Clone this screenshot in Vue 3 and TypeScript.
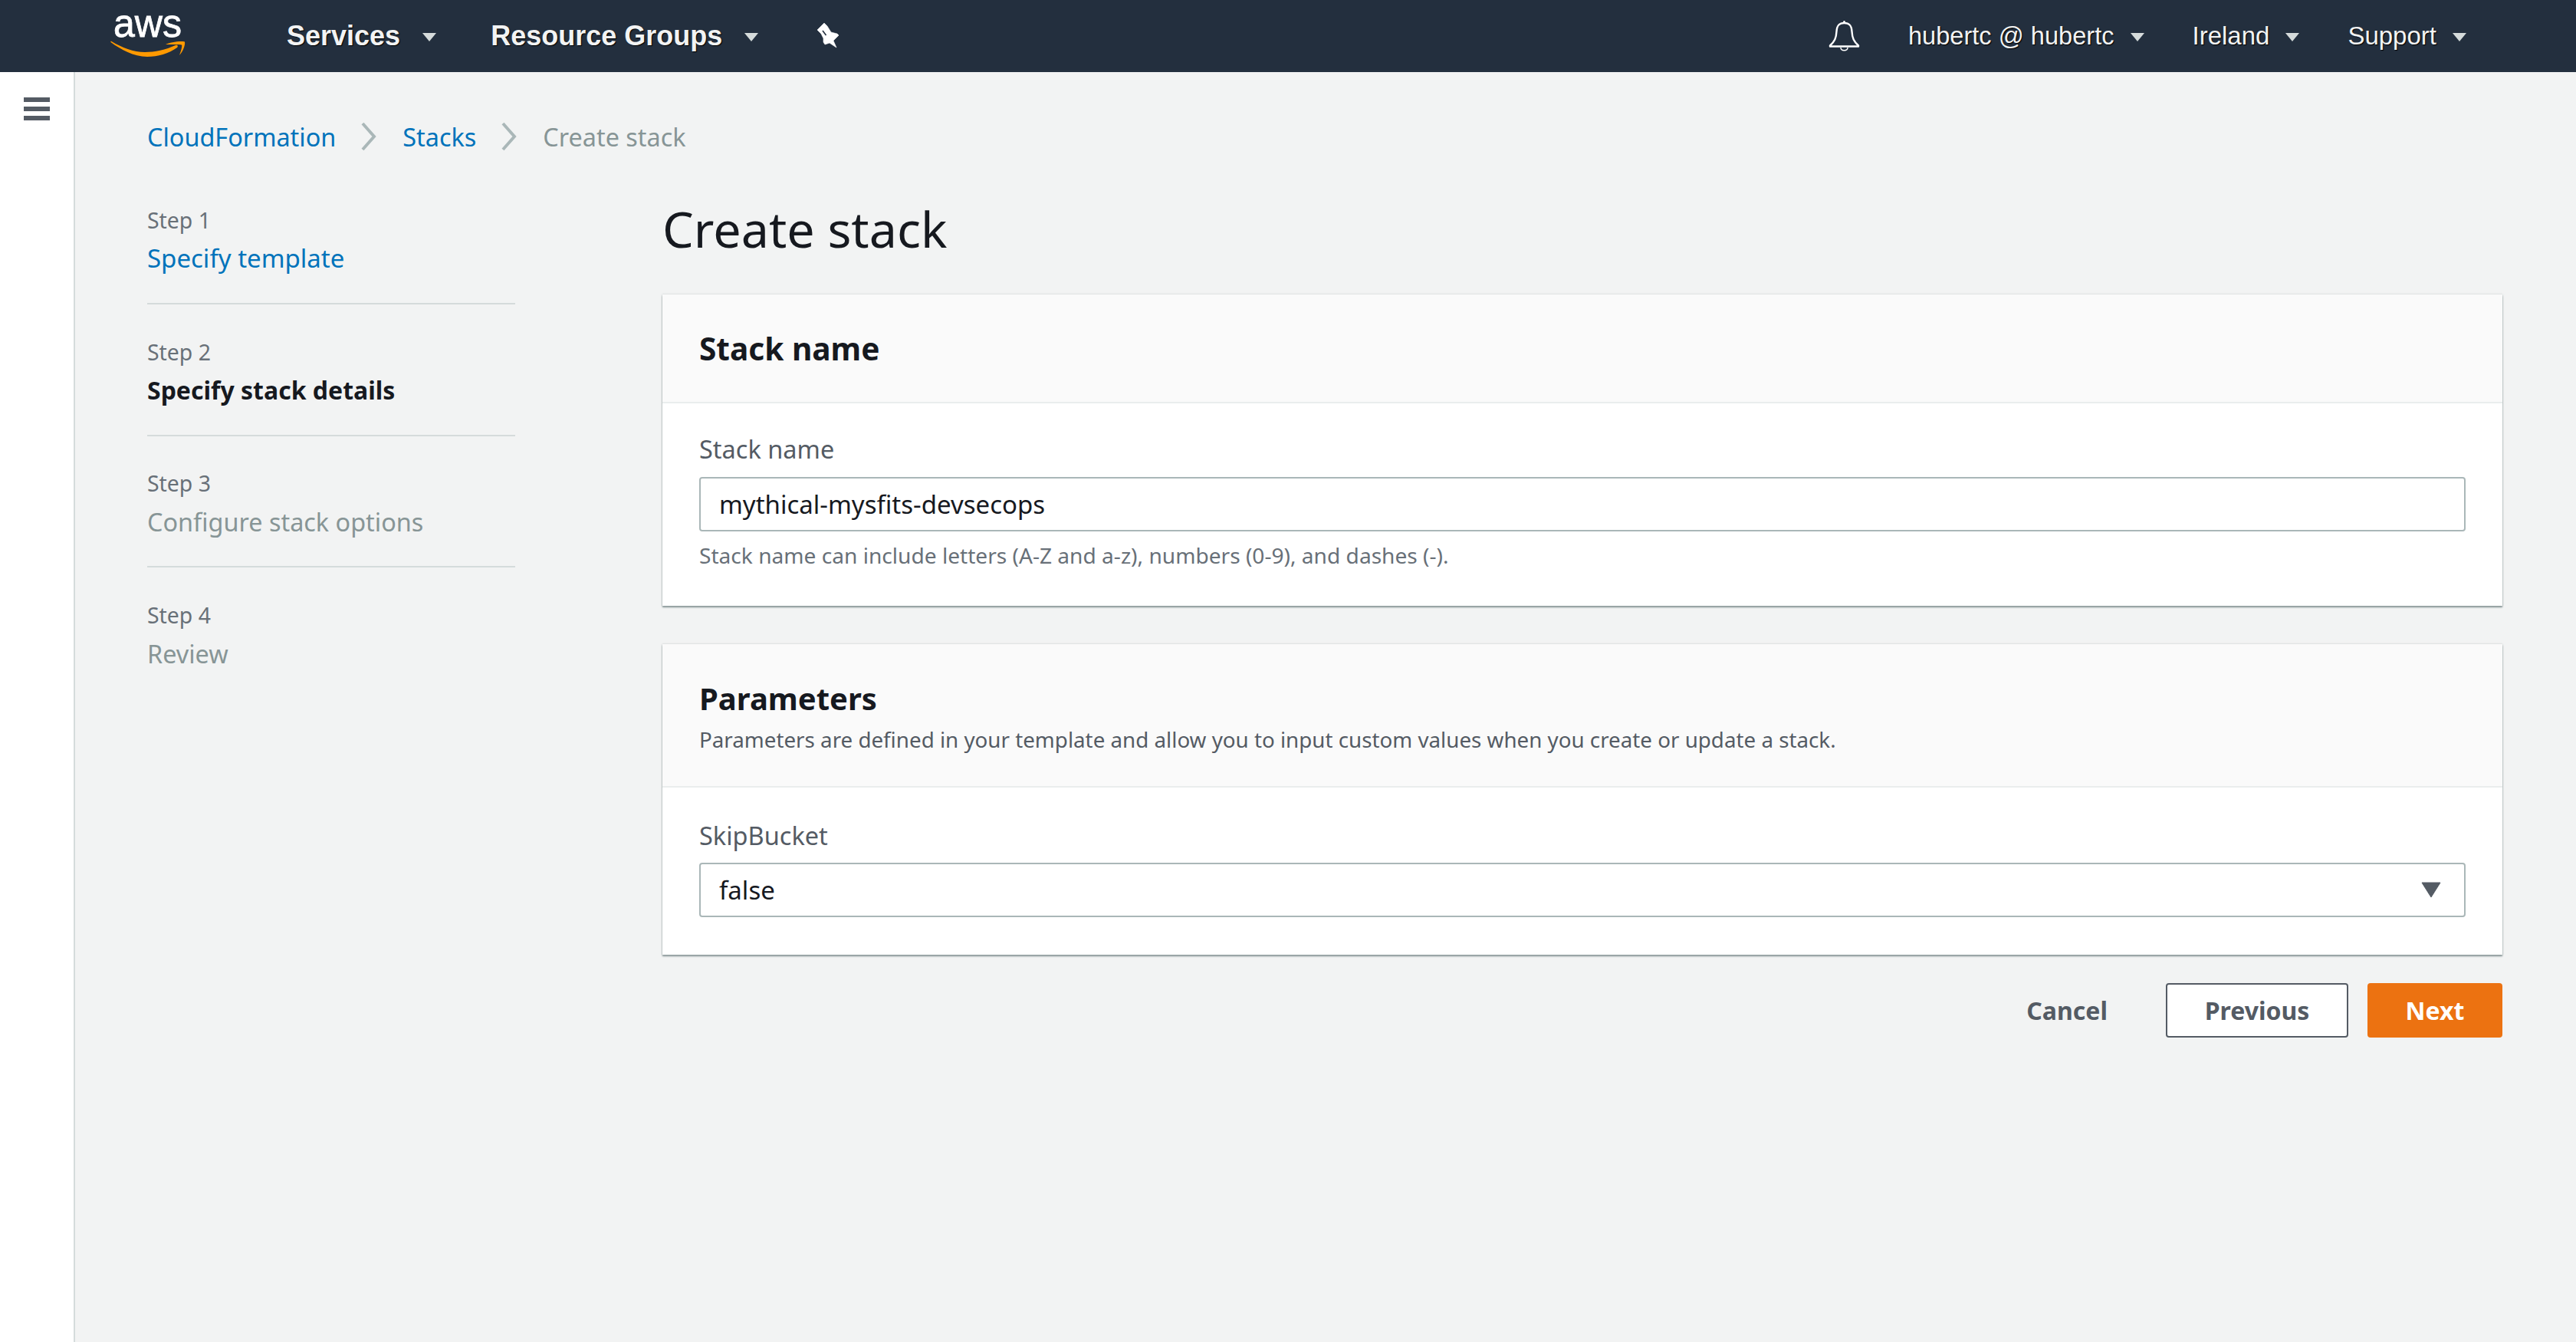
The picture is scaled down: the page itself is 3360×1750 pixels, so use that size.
<template>
  <div class="console">
    <header class="topbar">
      <a class="logo">
        <svg class="logo-mark" width="100" height="70" viewBox="0 0 100 70">
          <text x="4" y="37.5" textLength="89" lengthAdjust="spacingAndGlyphs" class="logo-text">aws</text>
          <path d="M0.5 45 C14 55 30 63.5 48 64 C62 64 76 60 87 52 C89 50 87 48 85 49 C72 55 58 58 45 58 C30 58 15 52 1.5 44 C0.5 43.5 0 44.5 0.5 45 Z" fill="#f90" />
          <path d="M72 48 C77 45 92 43 97 44.5 C98 49 94 58 90 62 C92 57 94 50 93 48.5 C90 47.5 80 48 72 48 Z" fill="#f90" />
        </svg>
      </a>
      <nav class="nav-main">
        <span class="nav-strong">Services</span>
        <i class="caret caret-services"></i>
        <span class="nav-strong nav-groups">Resource Groups</span>
        <i class="caret caret-services"></i>
        <svg class="pin" width="32" height="36" viewBox="15 8 32 36">
          <path d="M17 19 L26 10 L30 14 L35 22 L43 24 L45 26 L38 33 L42 42 L33 36 L27 38 L25 35 L25 30 L22 24 Z" fill="#fff" stroke="#fff" stroke-width="0.6" stroke-linejoin="round" />
          <path d="M24 20 L28.5 26" stroke="#232f3e" stroke-width="1.5" />
        </svg>
      </nav>
      <nav class="nav-right">
        <svg class="bell" width="42" height="42" viewBox="9 6 42 42">
          <circle cx="29.5" cy="8.5" r="1.5" fill="#fff" />
          <path d="M29.5 10 C23 10 20 13 19.5 21 C19 30 17 34 11 39.5 L11 40.5 L48 40.5 L48 39.5 C42 34 40 30 39.5 21 C39 13 36 10 29.5 10 Z" fill="none" stroke="#fff" stroke-width="2.4" stroke-linejoin="round" />
          <path d="M25 42 C25 47 34 47 34 42" fill="none" stroke="#fff" stroke-width="1.4" />
        </svg>
        <span class="nav-item user">hubertc @ hubertc</span>
        <i class="caret"></i>
        <span class="nav-item region">Ireland</span>
        <i class="caret"></i>
        <span class="nav-item support">Support</span>
        <i class="caret"></i>
      </nav>
    </header>

    <div class="body">
      <aside class="rail">
        <div class="burger"><span></span><span></span><span></span></div>
      </aside>

      <main class="main">
        <div class="crumbs">
          <a class="link">CloudFormation</a>
          <svg class="chev" width="22" height="38" viewBox="0 0 22 38"><path d="M3 2 L18 19 L3 36" fill="none" stroke="#aab7b8" stroke-width="4" /></svg>
          <a class="link">Stacks</a>
          <svg class="chev" width="22" height="38" viewBox="0 0 22 38"><path d="M3 2 L18 19 L3 36" fill="none" stroke="#aab7b8" stroke-width="4" /></svg>
          <span class="crumb-current">Create stack</span>
        </div>

        <div class="columns">
          <ol class="steps">
            <li v-for="s in steps" :key="s.label" class="step">
              <div class="step-label">{{ s.label }}</div>
              <div class="step-title" :class="s.state">{{ s.title }}</div>
            </li>
          </ol>

          <section class="form">
            <h1 class="heading">Create stack</h1>

            <div class="card">
              <div class="card-head first">
                <h2>Stack name</h2>
              </div>
              <div class="card-body first">
                <label class="label">Stack name</label>
                <div class="field">mythical-mysfits-devsecops</div>
                <p class="hint">Stack name can include letters (A-Z and a-z), numbers (0-9), and dashes (-).</p>
              </div>
            </div>

            <div class="card second">
              <div class="card-head">
                <h2>Parameters</h2>
                <p class="desc">Parameters are defined in your template and allow you to input custom values when you create or update a stack.</p>
              </div>
              <div class="card-body">
                <label class="label">SkipBucket</label>
                <div class="field select">
                  <span>false</span>
                  <svg width="26" height="21" viewBox="0 0 26 21"><path d="M1 1 H25 L13 20 Z" fill="#545b64" stroke="#545b64" stroke-linejoin="round" /></svg>
                </div>
              </div>
            </div>

            <div class="actions">
              <button class="btn cancel">Cancel</button>
              <button class="btn prev">Previous</button>
              <button class="btn next">Next</button>
            </div>
          </section>
        </div>
      </main>
    </div>
  </div>
</template>

<script setup lang="ts">
interface Step {
  label: string
  title: string
  state: 'done' | 'active' | 'todo'
}

const steps: Step[] = [
  { label: 'Step 1', title: 'Specify template', state: 'done' },
  { label: 'Step 2', title: 'Specify stack details', state: 'active' },
  { label: 'Step 3', title: 'Configure stack options', state: 'todo' },
  { label: 'Step 4', title: 'Review', state: 'todo' }
]
</script>

<style>
html,
body {
  margin: 0;
  background: #f2f3f3;
}
</style>

<style scoped>
.console {
  width: 3360px;
  height: 1750px;
  overflow: hidden;
  display: flex;
  flex-direction: column;
  background: #f2f3f3;
  color: #16191f;
  font-family: "Noto Sans", "Open Sans", sans-serif;
  font-size: 32px;
}

/* top bar */
.topbar {
  height: 94px;
  flex: none;
  display: flex;
  align-items: center;
  background: #232f3e;
  padding-left: 144px;
  padding-right: 143px;
  box-sizing: border-box;
  font-family: "Liberation Sans", Arial, sans-serif;
  color: #fff;
}
.logo {
  display: block;
  height: 70px;
  width: 100px;
  margin-top: -4px;
}
.logo-mark {
  overflow: visible;
}
.logo-text {
  fill: #fff;
  stroke: #fff;
  stroke-width: 0.8px;
  font-family: "Liberation Sans", Arial, sans-serif;
  font-size: 52.5px;
}
.nav-main {
  display: flex;
  align-items: center;
  margin-left: 130px;
}
.nav-strong {
  font-size: 36px;
  font-weight: 700;
  color: #f2f3f3;
  text-shadow: 1px 1px 1px #000;
}
.nav-groups {
  margin-left: 71px;
}
.caret {
  display: block;
  width: 0;
  height: 0;
  border-left: 9px solid transparent;
  border-right: 9px solid transparent;
  border-top: 11px solid #d5dbdb;
  margin-left: 21px;
  margin-top: 3px;
}
.caret-services {
  margin-left: 29px;
}
.pin {
  margin-left: 75px;
  margin-top: -2px;
}
.nav-right {
  margin-left: auto;
  display: flex;
  align-items: center;
}
.bell {
  margin-right: 62px;
}
.nav-item {
  font-size: 33px;
  color: #f2f3f3;
  text-shadow: 1px 1px 1px #000;
}
.nav-item.user {
  font-size: 32.6px;
}
.region,
.support {
  margin-left: 63px;
}

/* body */
.body {
  flex: 1;
  display: flex;
  min-height: 0;
}
.rail {
  width: 98px;
  flex: none;
  box-sizing: border-box;
  background: #fff;
  border-right: 2px solid #d5dbdb;
  padding: 33px 0 0 31px;
}
.burger {
  display: flex;
  flex-direction: column;
  gap: 6px;
  width: 34px;
}
.burger span {
  height: 6px;
  background: #545b64;
}
.main {
  flex: 1;
  padding: 64px 96px 0 94px;
  min-width: 0;
}
.crumbs {
  display: flex;
  align-items: center;
  height: 40px;
  font-size: 32.4px;
  line-height: 39px;
}
.link {
  color: #0073bb;
}
.chev {
  margin: 0 33px 0 32px;
}
.crumb-current {
  color: #879596;
}

.columns {
  display: grid;
  grid-template-columns: 480px 1fr;
  column-gap: 192px;
  margin-top: 66px;
}

/* wizard steps */
.steps {
  list-style: none;
  margin: 0;
  padding: 3px 0 0;
}
.step {
  padding-bottom: 36px;
  margin-bottom: 41.5px;
  border-bottom: 2px solid #d5dbdb;
}
.step:last-child {
  border-bottom: 0;
}
.step-label {
  font-size: 28.4px;
  line-height: 40px;
  color: #687078;
}
.step-title {
  margin-top: 8px;
  font-size: 33px;
  line-height: 44px;
}
.step-title.done {
  color: #0073bb;
}
.step-title.active {
  color: #16191f;
  font-size: 32px;
  font-weight: 700;
}
.step-title.todo {
  color: #879596;
  font-size: 32.4px;
}

/* form column */
.heading {
  margin: -2px 0 50px;
  font-size: 64.6px;
  line-height: 72px;
  font-weight: 400;
}
.card {
  background: #fff;
  box-shadow: 0 2px 2px #879596, 0 0 2px rgba(135, 149, 150, 0.5);
}
.card.second {
  margin-top: 50px;
}
.card-head {
  background: #fafafa;
  border-bottom: 2px solid #eaeded;
  padding: 47px 48px 41px;
}
.card-head.first {
  padding: 47px 48px 45px;
}
.card-head h2 {
  margin: 0;
  font-size: 40px;
  line-height: 48px;
  font-weight: 700;
}
.card-head.first h2 {
  font-size: 40.6px;
}
.desc {
  margin: 9px 0 0;
  font-size: 27.75px;
  line-height: 40px;
  color: #545b64;
}
.card-body {
  padding: 43px 48px 49px;
}
.card-body.first {
  padding: 40px 48px 46px;
}
.label {
  display: block;
  font-size: 32.5px;
  line-height: 40px;
  color: #545b64;
  margin-bottom: 15px;
}
.card-body.first .label {
  margin-bottom: 16px;
}
.field {
  height: 71px;
  box-sizing: border-box;
  display: flex;
  align-items: center;
  justify-content: space-between;
  padding: 0 30px 0 24px;
  border: 2px solid #aab7b8;
  border-radius: 4px;
  background: #fff;
  font-size: 33px;
  color: #16191f;
}
.hint {
  margin: 11px 0 0;
  font-size: 28.12px;
  line-height: 40px;
  color: #687078;
}
.actions {
  display: flex;
  align-items: center;
  justify-content: flex-end;
  margin-top: 37px;
}
.btn {
  height: 71px;
  box-sizing: border-box;
  border-radius: 4px;
  font-family: inherit;
  font-size: 32px;
  font-weight: 700;
  padding: 0;
}
.cancel {
  border: 0;
  background: transparent;
  color: #545b64;
  margin-right: 76px;
}
.prev {
  width: 238px;
  border: 2px solid #545b64;
  background: #fff;
  color: #545b64;
}
.next {
  width: 176px;
  margin-left: 25px;
  border: 0;
  background: #ec7211;
  color: #fff;
}
</style>
